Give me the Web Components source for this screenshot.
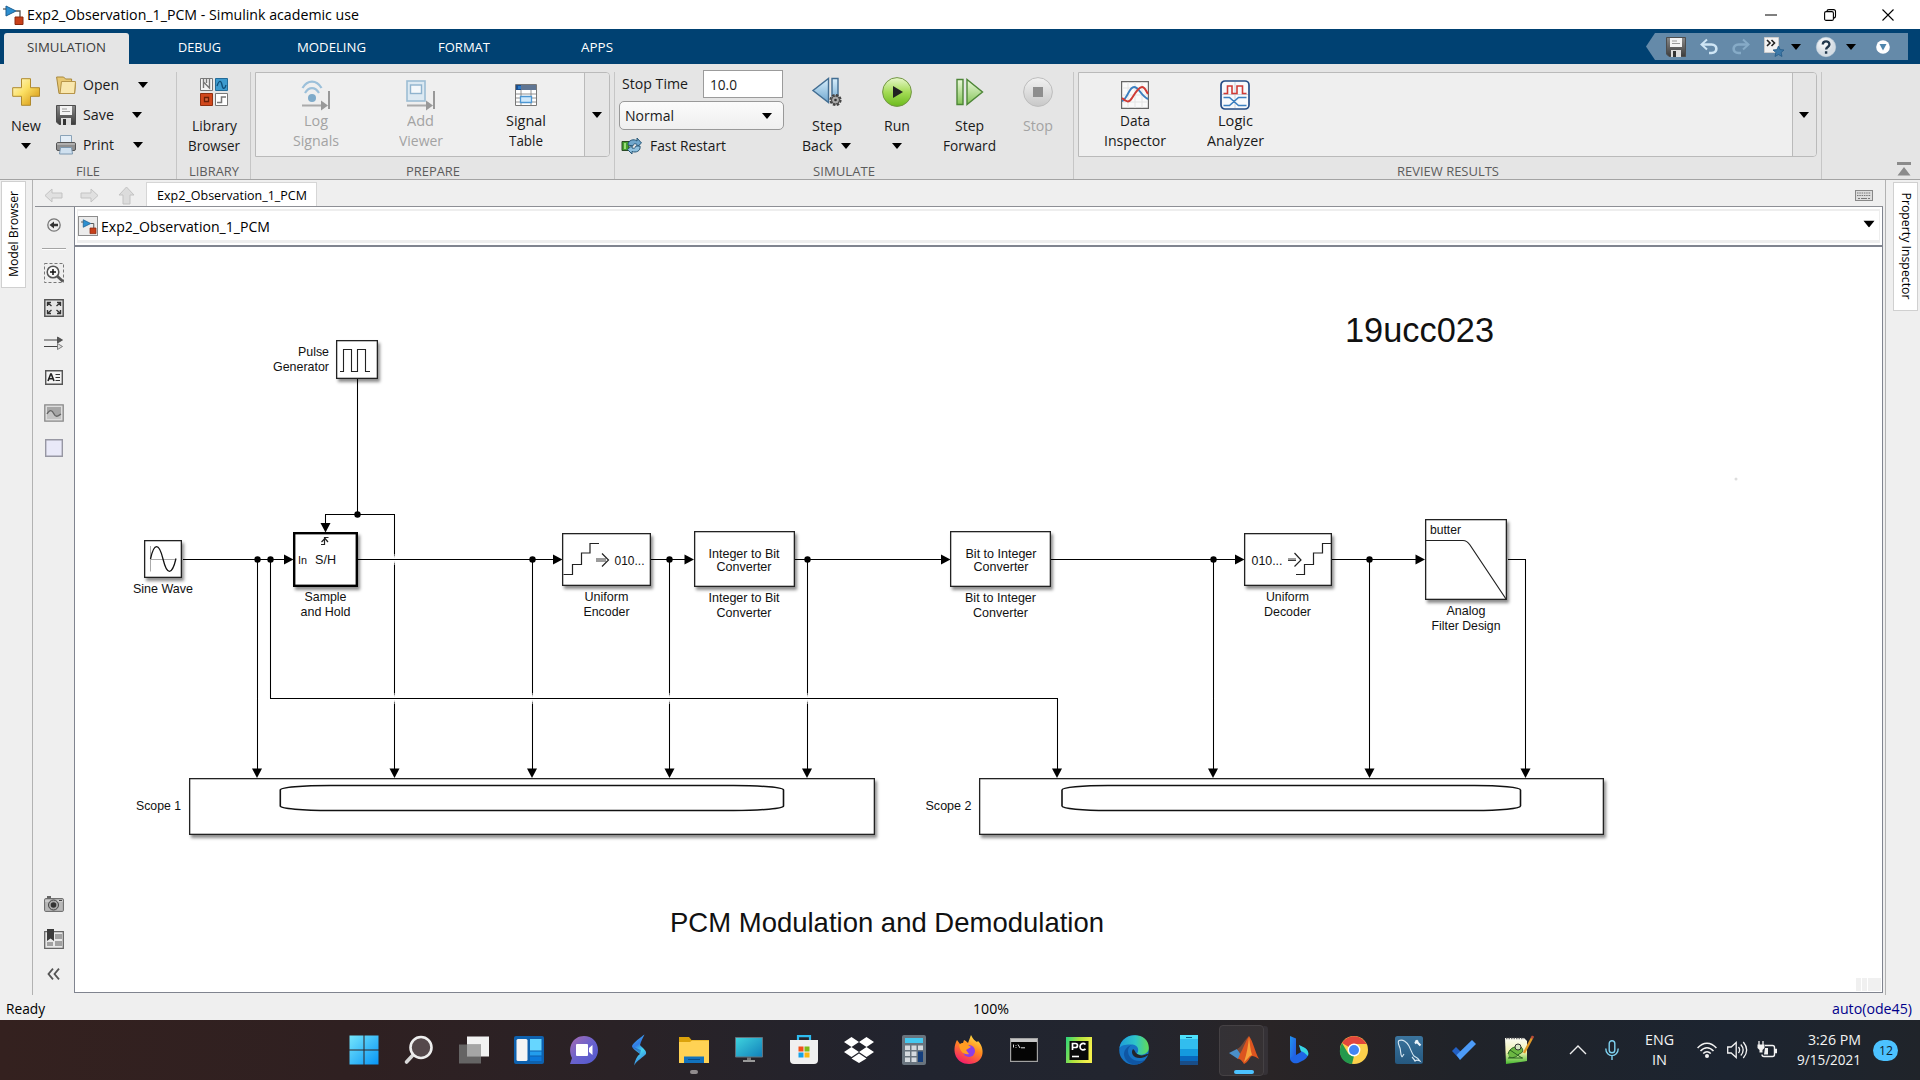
<!DOCTYPE html>
<html lang="en">
<head>
<meta charset="utf-8">
<title>Exp2_Observation_1_PCM - Simulink academic use</title>
<style>
html,body{margin:0;height:100%;overflow:hidden;background:#efefef}
body{font-family:"Open Sans","Noto Sans",sans-serif;font-size:14px;color:#1a1a1a}
</style>
</head>
<body>
<sim-window></sim-window>
<script>
const define=(name,css,html,ready)=>customElements.define(name,class extends HTMLElement{
  connectedCallback(){
    if(this.shadowRoot)return;
    const t=document.createElement('template');
    t.innerHTML='<style>*{box-sizing:border-box}'+css+'</style>'+(typeof html==='function'?html(this):html);
    this.attachShadow({mode:'open'}).append(t.content.cloneNode(true));
    if(ready)ready(this);
  }
});

/* Text squeezed or stretched horizontally to the width in "w". */
define('fit-text',':host{display:block;white-space:nowrap;line-height:20px;height:20px;flex:none}span{display:inline-block;transform-origin:0 50%}',
  e=>'<span>'+e.getAttribute('t')+'</span>',
  e=>{const w=+e.getAttribute('w');e.style.width=w+'px';const s=e.shadowRoot.querySelector('span');s.style.transform='scaleX('+w/parseFloat(getComputedStyle(s).width)+')';});
const T=(t,w,x='')=>`<fit-text t="${t}" w="${w}" ${x}></fit-text>`;

const floppy=`<linearGradient id="f" x2="0" y2="1"><stop stop-color="#8a8a8a"/><stop offset="1" stop-color="#3c3c3c"/></linearGradient><path d="M.5.5h19v19H3l-2.500-2.500z" fill="url(#f)" stroke="#4d4d4d"/><path d="M4 1h12v9H4z" fill="#f3f3f3"/><path d="M6 4h5M6 6.500h8" stroke="#999"/><path d="M5 13h10v7H5z" fill="#ddd"/><path d="M7 14h3v6H7z" fill="#333"/>`;
const simlogo=`<path d="M13 6h4v6" fill="none" stroke="#555" stroke-width="1.300"/><path d="M3 1l10 5-10 5z" fill="#2c8fd0" stroke="#1c5f92"/><path d="M0 4h3" stroke="#333"/><path d="M12 12h8v7.500h-8z" fill="#c8401a" stroke="#8a2a10"/>`;
const arrowShape='M1 7.500L8 1v4h10v5H8v4z';
const ICONS={
app:[20,20,simlogo],
model:[20,20,`<rect x=".5" y=".5" width="19" height="19" fill="#ececec" stroke="#8c8c8c"/><g transform="translate(3 3) scale(.75)">${simlogo}</g>`],
min:[12,12,'<path d="M0 6h12" stroke="#000"/>'],
restore:[12,12,'<rect x=".6" y="2.600" width="8.800" height="8.800" rx="1.500" fill="none" stroke="#000" stroke-width="1.100"/><path d="M3 2.500C3 1 4 .6 5 .6h4.500c1.300 0 2 .7 2 2V7c0 1-.5 2-2 2" fill="none" stroke="#000" stroke-width="1.100"/>'],
close:[12,12,'<path d="M.5.5l11 11M11.500.5l-11 11" stroke="#000" stroke-width="1.100"/>'],
save:[20,20,floppy],
undo:[18,16,'<path d="M1 5.500h9.500c6.500 0 6.500 8.500 0 8.500H8" fill="none" stroke="#cfe6f5" stroke-width="2.600"/><path d="M6 .5L.5 5.500 6 10.500" fill="none" stroke="#cfe6f5" stroke-width="2"/>'],
redo:[18,16,'<path d="M17 5.500H7.500C1 5.500 1 14 7.500 14H10" fill="none" stroke="#86abc7" stroke-width="2.600"/><path d="M12 .5l5.500 5L12 10.500" fill="none" stroke="#86abc7" stroke-width="2"/>'],
fav:[20,20,'<path d="M.5.5h14v15H.5z" fill="#f2f2f2" stroke="#ccc"/><path d="M3 3l3 3-3 3M7.500 3l3 3-3 3" fill="none" stroke="#222" stroke-width="1.600"/><path d="M14.500 9l1.600 3.600 3.900.4-2.900 2.600.9 3.900-3.500-2-3.500 2 .9-3.900L9 13l3.900-.4z" fill="#3d79a8" stroke="#235a86" stroke-width=".8"/>'],
help:[20,20,'<radialGradient id="h" cx=".4" cy=".3"><stop stop-color="#fff"/><stop offset="1" stop-color="#d5dde4"/></radialGradient><circle cx="10" cy="10" r="9.700" fill="url(#h)" stroke="#c6d3dd" stroke-width=".6"/><path d="M6.800 7.500c0-4.200 6.600-4.200 6.600 0 0 2.500-3.300 2.500-3.300 5M10.100 14.200v2.500" fill="none" stroke="#22384c" stroke-width="2.400"/>'],
circ:[14,14,'<circle cx="7" cy="7" r="6.800" fill="#fff"/><path d="M3.500 4h7L7 10.500z" fill="#4f86ad"/>'],
plus:[28,28,'<linearGradient id="p" x2="1" y2="1"><stop stop-color="#fffbd8"/><stop offset=".45" stop-color="#fbdf62"/><stop offset="1" stop-color="#d08a06"/></linearGradient><path d="M9.500.7h9v9h9v8.600h-9v9h-9v-9H.7V9.700h8.800z" fill="url(#p)" stroke="#b08a2e"/>'],
open:[20,18,'<path d="M.6 1h7l2 2h6v3l4 1-1 10.500H3z" fill="#e8c873" stroke="#a8883c"/><path d="M5.500 5.500h14L18.500 17.500H4z" fill="#f9e7ae" stroke="#b7954a"/>'],
print:[20,20,'<path d="M4.500.5h11v8h-11z" fill="#e4eef7" stroke="#8aa3b8"/><rect x=".5" y="7.500" width="19" height="8" rx="1.500" fill="#8f8f8f" stroke="#555"/><path d="M1 9h18" stroke="#d0d0d0"/><path d="M4.500 12.500h11l1 6.500h-13z" fill="#cfe0ef" stroke="#7c98b0"/>'],
library:[28,28,'<path d="M.5.5h12v12H.5z" fill="#f4f4f4" stroke="#777"/><path d="M3.500 1v9M3.500 4l6 6V1M6.500 1v4" stroke="#777" stroke-width="1.400" fill="none"/><path d="M15.500.5h12v12h-12z" fill="#3c9ace" stroke="#236b98"/><path d="M17 8c2-6 4-6 5-1s3 4 4 0" fill="none" stroke="#0f4f7a" stroke-width="1.300"/><path d="M.5 15.500h12v12H.5z" fill="#d1481d" stroke="#8f2f10"/><path d="M4.500 19.500h4v4h-4z" fill="#d9683f" stroke="#6c2008" stroke-width="1.300"/><path d="M15.500 15.500h12v12h-12z" fill="#fff" stroke="#777"/><path d="M17 24.500h4.500v-5.500H26" fill="none" stroke="#777" stroke-width="1.500"/>'],
log:[30,30,'<g fill="none" stroke="#9cc0da" stroke-width="2.200"><path d="M1.500 8c5-8.500 14-8.500 19 0M4 13c4-6.500 10-6.500 14 0"/></g><circle cx="11" cy="18" r="4" fill="#7fabca"/><path d="M1 25.500h20" stroke="#aaa" stroke-width="2"/><path d="M20 20.500l7 5-7 5z" fill="#999"/><path d="M28 11v18" stroke="#999" stroke-width="2"/>'],
viewer:[30,30,'<rect x="1" y="1" width="18" height="20" fill="#dce9f2" stroke="#9dbdd4" stroke-width="1.600"/><rect x="4.500" y="5" width="11" height="8.500" fill="#f4f8fb" stroke="#8fb3ce" stroke-width="1.400"/><path d="M1 25.500h20" stroke="#aaa" stroke-width="2"/><path d="M20 20.500l7 5-7 5z" fill="#999"/><path d="M28 11v18" stroke="#999" stroke-width="2"/>'],
table:[22,22,'<path d="M.5.5h21v21H.5z" fill="#fff" stroke="#777"/><path d="M1 1h20v5H1z" fill="#5f7593"/><path d="M1 1h5v5H1z" fill="#1d4e8c"/><rect x="3" y="2" width="3" height="3" fill="#2b79c8"/><path d="M1 10h20M1 14h20M1 18h20M6 6v15M16 6v15" stroke="#777" stroke-width=".8"/><path d="M5.500 12.500h11v6h-11z" fill="#cfe8fb" stroke="#4c96d2" stroke-width="1.300"/>'],
restart:[20,16,'<path d="M0 3.500h7v9H0z" fill="#45a02c" stroke="#2b4a24"/><path d="M2 5h2v6H2z" fill="#9bdc7d"/><path d="M6 7c0-5 6-6.500 9-4V0l4.500 5-4.500 4V6.500c-2-1.500-4-.5-4 1.500z" fill="#6fa6cc" stroke="#275777"/><path d="M18 8c1 5-4 7-8 5.500V16l-4.500-4.500L10 7.500V10c2 .8 3.500 0 4-2z" fill="#8fc0de" stroke="#275777"/>'],
stepback:[30,30,'<linearGradient id="sb" x2="0" y2="1"><stop stop-color="#d8effc"/><stop offset="1" stop-color="#6ea6cf"/></linearGradient><path d="M16.500 1.500v24L1 13.500z" fill="url(#sb)" stroke="#426d92" stroke-width="1.400"/><path d="M20 1.500h6v24h-6z" fill="url(#sb)" stroke="#426d92" stroke-width="1.400"/><circle cx="23.500" cy="23" r="5" fill="#bbb" stroke="#444" stroke-width="2.200" stroke-dasharray="2.500 1.400"/><circle cx="23.500" cy="23" r="4" fill="#aaa" stroke="#444"/><circle cx="23.500" cy="23" r="1.300" fill="#333"/>'],
run:[30,30,'<linearGradient id="r" x2="0" y2="1"><stop stop-color="#e8f8cc"/><stop offset=".5" stop-color="#a5dc57"/><stop offset="1" stop-color="#6bba1c"/></linearGradient><circle cx="15" cy="15" r="14.400" fill="url(#r)" stroke="#739646"/><path d="M11 9v12l10-6z" fill="#222"/>'],
stepfwd:[28,28,'<linearGradient id="sf" x2="0" y2="1"><stop stop-color="#eaf8da"/><stop offset="1" stop-color="#86c55a"/></linearGradient><path d="M1 1.500h6v25H1zM11 1.500v25L26.500 14z" fill="url(#sf)" stroke="#4d8637" stroke-width="1.400"/>'],
stop:[30,30,'<linearGradient id="s" x2="0" y2="1"><stop stop-color="#f2f2f2"/><stop offset="1" stop-color="#c8c8c8"/></linearGradient><circle cx="15" cy="15" r="14.400" fill="url(#s)" stroke="#bdbdbd"/><path d="M10 10h10v10H10z" fill="#8e8e8e"/>'],
data:[28,28,'<path d="M.6.6h26.800v26.800H.6z" fill="#fafafa" stroke="#666" stroke-width="1.200"/><path d="M1 7h26M1 14h26M1 21h26M7 1v26M14 1v26M21 1v26" stroke="#e4e4e4"/><path d="M1 20C6 19 8 6 13 6s7 9 14 12" fill="none" stroke="#3b7fc0" stroke-width="2"/><path d="M1 17c4 4 7 5 10 0S18 6 21 6s4 4 6 7" fill="none" stroke="#d03b36" stroke-width="2"/>'],
logic:[30,30,'<rect x="1" y="1" width="28" height="28" rx="4" fill="#f7f9fc" stroke="#244c85" stroke-width="1.700"/><path d="M15 2v26M2 14.500h26" stroke="#ccd3dd"/><path d="M3.500 13.500h4V6h4.500v7.500h5V6h5.500v7.500h4" fill="none" stroke="#d03b36" stroke-width="1.600"/><path d="M3.500 17.500h6l9 8h8M3.500 25.500h6l9-8h8" fill="none" stroke="#3b7fc0" stroke-width="1.600"/>'],
collapse:[14,14,'<path d="M0 0h14v3H0zM7 5l6.500 8.500H.5z" fill="#8b8b8b"/>'],
kbd:[18,11,'<rect x=".5" y=".5" width="17" height="10" fill="#ddd" stroke="#888"/><path d="M2 3h14M2 5.500h14" stroke="#777" stroke-dasharray="1.500 .8"/><path d="M3 8.500h2M6 8.500h6M13 8.500h2" stroke="#777"/>'],
left:[19,15,`<path d="${arrowShape}" fill="#e0e0e0" stroke="#c3c3c3"/>`],
right:[19,15,`<path d="${arrowShape}" transform="matrix(-1 0 0 1 19 0)" fill="#e0e0e0" stroke="#c3c3c3"/>`],
up:[17,19,'<path d="M8.500 1l7.500 8h-4v9H5V9H1z" fill="#dcdcdc" stroke="#c3c3c3"/>'],
hide:[14,14,'<circle cx="7" cy="7" r="6.200" fill="#eee" stroke="#777" stroke-width="1.300"/><path d="M2.500 7L7 3.500v2.200h4v2.600H7v2.200z" fill="#333"/>'],
zoom:[20,20,'<path d="M.5.5h19v19H.5z" fill="none" stroke="#777" stroke-dasharray="3 2"/><circle cx="9" cy="9" r="5.800" fill="#f8f8f8" stroke="#555" stroke-width="1.500"/><path d="M13 13l6 5.500" stroke="#555" stroke-width="2.800"/><path d="M6 9h6M9 6v6" stroke="#111" stroke-width="1.500"/>'],
fit:[20,18,'<path d="M.8.8h18.400v16.400H.8z" fill="#e5e5e5" stroke="#555" stroke-width="1.500"/><path d="M3.500 7V3.500H7M16.500 7V3.500H13M3.500 11v3.500H7M16.500 11v3.500H13M4 4l3.500 3M16 4l-3.500 3M4 14l3.500-3M16 14l-3.500-3" fill="none" stroke="#333" stroke-width="1.400"/>'],
arrows:[19,14,'<path d="M0 4h16M0 10.500h16" stroke="#444" stroke-width="1.200"/><path d="M13.500 1l5 3-5 3z" fill="#555" stroke="#444" stroke-width=".8"/><path d="M13.500 7.500l5 3-5 3z" fill="#ddd" stroke="#666" stroke-width=".8"/>'],
note:[18,15,'<path d="M.7.7h16.600v13.600H.7z" fill="#f4f4f4" stroke="#555" stroke-width="1.400"/><path d="M3 11l2.700-7h.6L9 11M4 8.800h4" fill="none" stroke="#222" stroke-width="1.600"/><path d="M10.500 4.500H15M10.500 7.500H15M10.500 10.500H15" stroke="#333"/>'],
image:[20,18,'<path d="M.8.8h18.400v16.400H.8z" fill="#ddd" stroke="#888" stroke-width="1.300"/><path d="M3 3h14v12H3z" fill="#a6a6a6"/><path d="M3 10c3-5 5-4 7 0s4 2 7 0v5H3z" fill="#c4c4c4"/><path d="M3 10c3-5 5-4 7 0s4 2 7 0" fill="none" stroke="#666" stroke-width="1.400"/>'],
area:[18,18,'<path d="M.7.7h16.600v16.600H.7z" fill="#e9e9f8" stroke="#9797a3" stroke-width="1.400"/>'],
camera:[20,16,'<path d="M3 0h4v3H3z" fill="#666"/><rect x=".6" y="2.600" width="18.800" height="12.800" rx="1" fill="#b8b8b8" stroke="#666"/><path d="M1 5h18" stroke="#ddd"/><circle cx="9.500" cy="9" r="5" fill="#aaa" stroke="#444"/><circle cx="9.500" cy="9" r="2.800" fill="#333"/><path d="M15 4.500h3" stroke="#444"/>'],
book:[20,20,'<path d="M.7 2.700h18.600v16.600H.7z" fill="#e8e8e8" stroke="#666" stroke-width="1.300"/><path d="M11 5h7v5h-7zM3 13h6v4H3zM11 12h7v5h-7z" fill="#a2a2a2"/><path d="M3 0h7v12l-3.500-2.500L3 12z" fill="#3b3b3b"/>'],
chev:[13,12,'<path d="M6 .7L1.500 6 6 11.300M12 .7L7.500 6l4.500 5.300" fill="none" stroke="#555" stroke-width="1.800"/>'],
/* taskbar */
win:[30,30,'<linearGradient id="w" x2="1" y2="1"><stop stop-color="#75e6fb"/><stop offset="1" stop-color="#0794f5"/></linearGradient><path d="M.5.5h14v14H.5zM15.500.5h14v14h-14zM.5 15.500h14v14H.5zM15.500 15.500h14v14h-14z" fill="url(#w)"/>'],
search:[28,30,'<path d="M8 20l-6.500 7" stroke="#d9d9d9" stroke-width="3.600" stroke-linecap="round"/><circle cx="16" cy="12.500" r="10.500" fill="#55494c" stroke="#eee" stroke-width="2.600"/>'],
tasks:[30,28,'<path d="M8 .5h22v20H8z" fill="#f2f2f2"/><path d="M0 8.500h22v19H0z" fill="#6b6b6b" opacity=".9"/><path d="M8 8.500h14v12H8z" fill="#a5a5a5"/>'],
widgets:[30,28,'<rect width="30" height="28" rx="2" fill="#0e61ae"/><rect x="2.500" y="3" width="11" height="22" rx="1.500" fill="#f4f4f4"/><path d="M16 3h11.500v11.500H16z" fill="#66d6ff"/><path d="M16 15.500h11.500v4H16z" fill="#229ded"/><path d="M16 20.500h11.500V25H16z" fill="#0c79da"/>'],
chat:[30,30,'<linearGradient id="c" x2="1" y2="1"><stop stop-color="#a96bb0"/><stop offset=".5" stop-color="#6a62cd"/><stop offset="1" stop-color="#5158ce"/></linearGradient><path d="M15 1C23 1 29 7 29 15s-6 14-14 14H1l2-6C-2 12 4 1 15 1z" fill="url(#c)"/><rect x="7" y="9" width="12" height="12" rx="1" fill="#fff"/><path d="M20 13l3.500-3v10L20 17z" fill="#fff"/>'],
skill:[18,32,'<linearGradient id="k" x2=".3" y2="1"><stop stop-color="#45b8ef"/><stop offset=".4" stop-color="#327be5"/><stop offset=".65" stop-color="#45d4ee"/><stop offset="1" stop-color="#3a86e0"/></linearGradient><path d="M14.500.5C11 3 3 9 2 12c0 3 5 5 8 8-3 2-5 6-6 11.500 3-5 9-8 12-11.500 1-4-4-6-6-9 1-4 3-7 4.500-10.500z" fill="url(#k)"/><path d="M3 13l7 7 1-4z" fill="#2558b8" opacity=".6"/>'],
folder:[30,28,'<path d="M0 1h10l2.500 3H30v9H0z" fill="#dba20b"/><path d="M0 6h11l2-1.500h17V27H0z" fill="#ffd254"/><path d="M5 20.500h20V27H5z" fill="#1272bd"/><path d="M9 23.500h12" stroke="#0b4c86"/>'],
monitor:[28,26,'<linearGradient id="m" x2="1" y2="1"><stop stop-color="#3fd4de"/><stop offset="1" stop-color="#117fba"/></linearGradient><path d="M.5.5h27V20H.5z" fill="url(#m)" stroke="#63727c"/><path d="M12 20.500h4v3h-4z" fill="#777"/><path d="M8 24h12" stroke="#999" stroke-width="2"/>'],
store:[30,30,'<path d="M9 6V1.200h12V6" fill="none" stroke="#2ebcf0" stroke-width="2.200"/><path d="M1 5h28v20q0 4-4 4H5q-4 0-4-4z" fill="#f0f0f0"/><path d="M9.500 11.500h5v5h-5z" fill="#f1511b"/><path d="M15.500 11.500h5v5h-5z" fill="#80b918"/><path d="M9.500 17.500h5v5h-5z" fill="#15a2e8"/><path d="M15.500 17.500h5v5h-5z" fill="#fbb813"/>'],
dropbox:[30,28,'<path d="M7.500 1L15 6 7.500 11 0 6zM22.500 1L30 6l-7.500 5L15 6zM7.500 11L15 16l-7.500 5L0 16zM22.500 11L30 16l-7.500 5L15 16zM15 17.500l7.500 5L15 27l-7.500-4.500z" fill="#fff"/>'],
calc:[24,30,'<rect width="24" height="30" rx="2" fill="#69747e"/><path d="M3 3h18v5H3z" fill="#45c9f0"/><path d="M3 10.500h5v4.500H3zM9.500 10.500h5v4.500h-5zM16 10.500h5v4.500h-5zM3 16.500h5V21H3zM9.500 16.500h5V21h-5zM3 22.500h5V27H3zM9.500 22.500h5V27h-5z" fill="#d5dade"/><path d="M16 16.500h5V27h-5z" fill="#153f7c"/>'],
firefox:[30,30,'<linearGradient id="ff" x1=".8" x2=".3" y2="1"><stop stop-color="#ffe84a"/><stop offset=".45" stop-color="#ff8a1e"/><stop offset="1" stop-color="#f4186e"/></linearGradient><path d="M3 5l3 4 3-1 1-3c2 1 3 2 4 3L17 0c2 4 4 6 6 7l1-1c8 8 6 23-9 23C2 29-3 16 3 5z" fill="url(#ff)"/><circle cx="15" cy="16" r="6" fill="#8b3fe6"/><path d="M5 10c3-3 7-2 9 0l3 2-5 3 3 4c-5 1-9-2-10-9z" fill="#ff9d22"/>'],
cmd:[28,24,'<rect x=".6" y=".6" width="26.800" height="22.800" fill="#050505" stroke="#a2a2a2" stroke-width="1.200"/><path d="M1 1h26v3H1z" fill="#c6c6c6"/><path d="M3.500 6.500v3M6 7v.8M6 9v.8M8 6.500l2 3.500M11 9.800h4" stroke="#ddd" stroke-width="1"/>'],
pycharm:[26,26,'<linearGradient id="py" x2="1" y2=".3"><stop stop-color="#28d67d"/><stop offset=".5" stop-color="#aee23d"/><stop offset="1" stop-color="#f4f04c"/></linearGradient><rect width="26" height="26" fill="url(#py)"/><path d="M3.500 4h19v19h-19z" fill="#090909"/><path d="M6.500 13V6.500h3a2 2 0 0 1 0 4h-3M19.500 7.500c-2-2-5.500-1-5.500 2.200s3.500 4.200 5.500 2.200" fill="none" stroke="#fff" stroke-width="1.700"/><path d="M6 19.500h7" stroke="#fff" stroke-width="1.600"/>'],
edge:[30,30,'<linearGradient id="e1" x2="1"><stop stop-color="#1e9dd9"/><stop offset=".55" stop-color="#2fc5c8"/><stop offset="1" stop-color="#62dc56"/></linearGradient><circle cx="15" cy="15" r="14.800" fill="#1673c4"/><path d="M.5 13C3-4 30-4 29.800 13c0 6-7 8-12 6 3-4 1-9-4-9.500C8 9 2 10 .5 13z" fill="url(#e1)"/><path d="M9 16c0 7 7 12 17 9C20 32 7 31 5 20c-.6-4 3-9 8-10-3 1-4 4-4 6z" fill="#0d4c9a" opacity=".75"/><path d="M14 14c-3 4 1 10 8 9 3-.4 5-1.500 7-3 0-1 0-1-1-1-4 2-8 2-11-1-1-1-1-3-3-4z" fill="#24242b"/>'],
phone:[18,30,'<rect width="18" height="30" rx="1" fill="#32bdee"/><path d="M0 0h18v4H0z" fill="#4de0fb"/><path d="M0 14h18v7H0z" fill="#149ade"/><path d="M0 21h18v5H0z" fill="#0868bd"/><path d="M0 26h18v4H0z" fill="#194d88"/><path d="M6 2.500h6" stroke="#0b5c80"/>'],
matlab:[30,28,'<path d="M0 17l8-4 5 5-4 5z" fill="#4a8fc8"/><path d="M8 13c5-2 7-9 12-13-2 7-4 15-8 19z" fill="#74493a"/><path d="M20 0c-4 6-6 13-9 18l-2 5c3 0 4 2 6 5 5-2 5-7 8-8 2 0 4 1 7 3C26 16 24 5 20 0z" fill="#dc541f"/><path d="M20 1c-1 9-2 16-5 25 4-3 5-6 8-7-2-6-2-12-3-18z" fill="#f7a13a"/>'],
bing:[20,28,'<linearGradient id="b" x2="1" y2="1"><stop stop-color="#2195ef"/><stop offset="1" stop-color="#2550dd"/></linearGradient><path d="M1 0l6 2.500V22l-3 4-3-4z" fill="url(#b)"/><path d="M10 9l6 3c5 3 4 9-1 12l-6 3c-4 1-8-1-8-5l6-3 5-3z" fill="#1f65e5"/><path d="M10 9l6 3c3 2 4 5 3 8l-4-3.500-3-1.500z" fill="#38d7df"/>'],
chrome:[28,28,'<circle cx="14" cy="14" r="14" fill="#fcd04b"/><path d="M14 14L2 7C8-2.500 21-2 26.500 8H14z" fill="#e2463b"/><path d="M2 7l6.500 11 5.500 2-2 8C1 27-3 16 2 7z" fill="#24994c"/><circle cx="14" cy="14" r="6.400" fill="#fff"/><circle cx="14" cy="14" r="5" fill="#4285f4"/>'],
mysql:[28,28,'<linearGradient id="my" x2="0" y2="1"><stop stop-color="#3b749d"/><stop offset="1" stop-color="#25587f"/></linearGradient><rect width="28" height="28" rx="2.500" fill="url(#my)"/><path d="M7 21c-2-3-1-6-2-9C4 9 2 6 4 4.500 8 3 12 6 14 10c2 4 3 8 5 10 2 1 4 2 6 5-2-1-4-1-5 0-1-2-2-3-3-4M7 21l2-3" fill="none" stroke="#d7e8f2" stroke-width="1.100"/><path d="M20.500 4.500l5 5M20 7.500l3-3" stroke="#eef5fa" stroke-width="2.200"/>'],
todo:[24,20,'<path d="M0 11l4-4 8 8-4 4.500z" fill="#2260c4"/><path d="M4.500 15L20 0l4 4L8 20z" fill="#4c9bf7"/>'],
npp:[30,28,'<linearGradient id="n" x2="0" y2="1"><stop stop-color="#fcfcf5"/><stop offset=".55" stop-color="#eff2b0"/><stop offset="1" stop-color="#43b92d"/></linearGradient><path d="M1 2h19l3 3v20L2 28z" fill="url(#n)"/><path d="M2 2.500h18" stroke="#777" stroke-width="1.500" stroke-dasharray="1.500 1"/><path d="M4 18c2-7 8-8 13-7 3 3 2 6-2 7-3 4-7 4-10 3" fill="#6cb842" stroke="#285f22"/><circle cx="14" cy="11" r="3" fill="#d7e7c3" stroke="#333"/><path d="M4 22h15M6 14l12 8" stroke="#275e1d"/><path d="M28.500 1L20 17" stroke="#e09a28" stroke-width="2.400"/><path d="M29 0l-1.300 2.500" stroke="#ba4a39" stroke-width="2.400"/>'],
tup:[18,10,'<path d="M1 9l8-8 8 8" fill="none" stroke="#eee" stroke-width="1.400"/>'],
mic:[14,20,'<rect x="4.200" y=".7" width="5.600" height="12" rx="2.800" fill="none" stroke="#7ed0ee" stroke-width="1.400"/><path d="M.8 8.500c0 9.500 12.400 9.500 12.400 0M7 16v4" fill="none" stroke="#7ed0ee" stroke-width="1.400"/>'],
wifi:[20,16,'<g fill="none" stroke="#f2f2f2" stroke-width="1.500"><path d="M.6 6c5.500-6.500 13.300-6.500 18.800 0M3.500 9c4-4.500 9-4.500 13 0M6.200 11.500c2.300-2.500 5.300-2.500 7.600 0"/></g><circle cx="10" cy="14" r="2" fill="#f2f2f2"/>'],
sound:[20,18,'<path d="M.7 6h3.500l5-4.500v15L4.200 12H.7z" fill="none" stroke="#f2f2f2" stroke-width="1.300"/><path d="M11.500 6c1.500 2 1.500 4 0 6M13.800 3.500c3 3.500 3 7.500 0 11M16.300 1c4.200 5 4.200 11 0 16" fill="none" stroke="#f2f2f2" stroke-width="1.300"/>'],
batt:[20,18,'<path d="M8 4.500h7.500q2 0 2 2v7q0 2-2 2H7q-2 0-2-2" fill="none" stroke="#f2f2f2" stroke-width="1.400"/><path d="M18.500 8h1v4h-1z" stroke="#f2f2f2"/><path d="M8 7h3v6.500H7z" fill="#f2f2f2"/><path d="M2 0v4M6 0v4" stroke="#f2f2f2" stroke-width="1.300"/><path d="M.5 3.500h7V7l-2 2v2.500h-3V9l-2-2z" fill="#f2f2f2"/>']
};
define('ui-icon',':host{display:block;flex:none}svg{display:block;overflow:visible}',e=>{
  const [w,h,s]=ICONS[e.getAttribute('name')];
  return `<svg width="${w}" height="${h}" viewBox="0 0 ${w} ${h}">${s}</svg>`;});
const I=(n,x='')=>`<ui-icon name="${n}" ${x}></ui-icon>`;

define('drop-arrow',':host{display:block;width:10px;height:6px;flex:none}svg{display:block}','<svg width="10" height="6"><path d="M0 0h10L5 6z" fill="#000"/></svg>');
const A='<drop-arrow></drop-arrow>';

define('title-bar',`:host{display:flex;height:29px;background:#fff;align-items:center;padding-left:3px;font-size:14.500px;color:#000}
.t{margin-left:4px;flex:1}.w{display:flex;gap:46.500px;padding-right:26px}`,
 `${I('app')}<div class="t">${T('Exp2_Observation_1_PCM - Simulink academic use',332)}</div><div class="w">${I('min')}${I('restore')}${I('close')}</div>`);

define('tab-bar',`:host{display:flex;height:35px;background:#004172;padding:4px 0 0 4px;color:#fff;font-size:13.500px;gap:7.500px}
.b{width:125px;height:31px;display:flex;justify-content:center;align-items:center;padding-bottom:4px}
.s{background:#e5e5e5;color:#3b3b3b;border-radius:3px 3px 0 0}
.q{margin-left:auto;margin-right:12px;width:262px;height:27px;background:#658aa9;clip-path:polygon(9px 0,100% 0,100% 100%,9px 100%,0 50%);display:flex;align-items:center;padding-left:20px}`,
 `<div class="b s">${T('SIMULATION',79)}</div><div class="b">${T('DEBUG',43)}</div><div class="b">${T('MODELING',69)}</div><div class="b">${T('FORMAT',52)}</div><div class="b">${T('APPS',32)}</div>
 <div class="q">${I('save')}${I('undo','style="margin-left:15px"')}${I('redo','style="margin-left:12px"')}${I('fav','style="margin-left:15px"')}<drop-arrow style="margin-left:7px"></drop-arrow>${I('help','style="margin-left:15px"')}<drop-arrow style="margin-left:10px"></drop-arrow>${I('circ','style="margin-left:20px"')}</div>`);

/* A labelled group of the toolstrip. */
define('strip-section',':host{display:flex;flex-direction:column;height:115px;flex:none;position:relative;border-right:1px solid transparent;border-image:linear-gradient(transparent 8%,#c6c6c6 8%) 1}.b{height:98px;display:flex}.l{display:flex;justify-content:center;align-items:center;height:17px;color:#5c5c5c;font-size:13px}',
 e=>`<div class="b"><slot></slot></div><div class="l">${T(e.getAttribute('label'),e.getAttribute('lw'))}</div>`);

/* Tall button: icon above one or two centred lines. "tight" narrows the gap below the icon. */
define('strip-button',':host{display:flex;flex-direction:column;align-items:center;flex:none;color:#1a1a1a}:host([off]){color:#a3a3a3}.i{height:34px;display:flex;align-items:center;justify-content:center;margin-bottom:6.500px}:host([tight]) .i{height:36px;margin-bottom:-2.500px}.r{display:flex;height:20px;align-items:center;gap:8px}',
 e=>{const g=e.getAttribute('lines').split('|').map(s=>{
   if(s==='v')return '<div class="r">'+A+'</div>';
   const [t,w,d]=s.split(':');return `<div class="r">${T(t,w)}${d?A:''}</div>`;}).join('');
  return `<div class="i">${I(e.getAttribute('icon'))}</div>${g}`;});
const B=(icon,lines,w,x='',pad='')=>`<strip-button icon="${icon}" lines="${lines}" style="width:${w}px;${pad}" ${x}></strip-button>`;

define('strip-gallery',':host{display:flex;height:85px;margin-top:8px;background:#efefef;border:1px solid #bababa;border-radius:0 4px 4px 0;flex:none;overflow:hidden}.c{flex:1;display:flex;padding-top:4px}.d{width:24.500px;background:#e5e5e5;border-left:1px solid #bababa;display:flex;align-items:center;justify-content:center}',
 `<div class="c"><slot></slot></div><div class="d">${A}</div>`);

define('tool-strip',`:host{display:flex;height:116px;background:#e5e5e5;border-bottom:1px solid #a3a3a3;font-size:14px}
.f{display:flex;flex-direction:column;gap:10px;padding:11px 0 0 6px;width:102px}
.f div{display:flex;align-items:center;height:20px;gap:7px}
.o{width:170px;padding:6px 0 0 4px}.o1,.o2,.o3{display:flex;align-items:center}
.in{margin-left:15px;width:80px;height:28px;background:#fff;border:1px solid #9b9b9b;padding:4px 6px}
.o1{padding-left:3px}.o2{margin-top:3px;width:165px;height:29px;border:1px solid #999;border-radius:5px;background:linear-gradient(#fbfbfb,#efefef);padding:0 11px 0 5px;justify-content:space-between}
.o3{padding:6px 0 0 3px;gap:8px}.c{margin-left:auto;padding:98px 9px 0 0}.s{display:flex;padding:11px 0 0 1px}`,
 `<strip-section label="FILE" lw="24" style="width:177px">
   ${B('plus','New:30|v',51,'','padding-top:11px')}
   <div class="f" style="padding-left:5px">
    <div>${I('open')}${T('Open',36)}<drop-arrow style="margin-left:12px"></drop-arrow></div>
    <div>${I('save')}${T('Save',31)}<drop-arrow style="margin-left:11px"></drop-arrow></div>
    <div>${I('print')}${T('Print',31)}<drop-arrow style="margin-left:12px"></drop-arrow></div></div>
  </strip-section>
  <strip-section label="LIBRARY" lw="50" style="width:74px">${B('library','Library:45|Browser:52',74,'','padding-top:11px')}</strip-section>
  <strip-section label="PREPARE" lw="54" style="width:364px"><strip-gallery style="margin-left:4px;width:354.500px"><div style="width:7px"></div>
   ${B('log','Log:24|Signals:46',105,'off tight')}${B('viewer','Add:27|Viewer:44',105,'off tight')}${B('table','Signal:40|Table:34',105,'tight')}</strip-gallery></strip-section>
  <strip-section label="SIMULATE" lw="62" style="width:459px">
   <div class="o"><div class="o1">${T('Stop Time',66)}<div class="in">${T('10.0',27)}</div></div>
   <div class="o2">${T('Normal',49)}${A}</div><div class="o3">${I('restart')}${T('Fast Restart',76)}</div></div>
   <div class="s">${B('stepback','Step:30|Back:31:v',81)}${B('run','Run:26|v',59)}${B('stepfwd','Step:29|Forward:53',87)}${B('stop','Stop:30',49,'off')}</div>
  </strip-section>
  <strip-section label="REVIEW RESULTS" lw="102" style="width:748px"><strip-gallery style="margin-left:4px;width:739px"><div style="width:6px"></div>
   ${B('data','Data:30|Inspector:62',100,'tight')}${B('logic','Logic:35|Analyzer:57',100,'tight')}</strip-gallery></strip-section>
  <div class="c">${I('collapse')}</div>`);

define('side-tab',':host{display:flex;background:#fff;border:1px solid #d0d0d0;align-items:center;justify-content:center;flex:none;color:#000;font-size:12.500px;overflow:visible}.r{flex:none}',
 e=>`<div class="r" style="transform:translateY(-1px) rotate(${e.getAttribute('deg')}deg)">${T(e.getAttribute('text'),e.getAttribute('tw'))}</div>`);

define('side-palette',`:host{display:flex;flex-direction:column;width:41px;align-items:center;flex:none}
.k{height:35px;display:flex;align-items:center}.h{height:36px}.s{width:24px;height:2px;background:#a5a5a5;border-bottom:1px solid #fff;margin:5px 0}.e{flex:1}.z{height:2px}`,
 `<div class="k h">${I('hide')}</div><div class="s"></div>${['zoom','fit','arrows','note','image','area'].map(n=>`<div class="k">${I(n)}</div>`).join('')}<div class="e"></div>${['camera','book','chev'].map(n=>`<div class="k">${I(n)}</div>`).join('')}<div class="z"></div>`);

/* Diagram node; coordinates share the wiring layer's system. */
define('sim-block',`:host{position:absolute;background:#fff;border:1px solid #111;box-shadow:2px 3px 3px rgba(0,0,0,.45)}:host([bold]){border:2px solid #000}svg{position:absolute;overflow:visible}`,
 e=>{const g=n=>+e.getAttribute(n),x=g('x'),y=g('y'),w=g('w'),h=g('h');
  const b=e.hasAttribute('bold')?2:1;
  e.style.cssText=`box-sizing:border-box;left:${x-75}px;top:${y-247}px;width:${w}px;height:${h}px`;
  return `<svg style="left:${-b}px;top:${-b}px" width="${w}" height="${h}" viewBox="${x} ${y} ${w} ${h}" font-family="Liberation Sans,Arial,sans-serif" font-size="12.400" fill="none" stroke="#222">${b===1?`<rect x="${x+.65}" y="${y+.65}" width="${w-1.3}" height="${h-1.3}" stroke="#222" stroke-width="1.300"/>`:`<rect x="${x+1.2}" y="${y+1.2}" width="${w-2.4}" height="${h-2.4}" stroke="#000" stroke-width="2.400"/>`}${GLYPHS[e.getAttribute('kind')]||''}</svg>`;});
const tx=(t,x,y,w,a='middle',fs=12.4)=>`<text x="${x}" y="${y}" text-anchor="${a}" font-size="${fs}" textLength="${w}" lengthAdjust="spacingAndGlyphs" fill="#111" stroke="none">${t}</text>`;
const GLYPHS={
 pulse:'<path d="M340 371.500h3.500V349.500h8v22h6v-22h8v22h4.500" stroke-width="1.100"/>',
 sine:'<path d="M150.500 546v25.500M150 559.500h26" stroke="#aaa"/><path d="M150.500 559C154 542.500 159 542.500 163 559s9 16.500 13-.5" stroke="#111" stroke-width="1.300"/>',
 sh:tx('In',298,563.500,9,'start',11.5)+tx('S/H',325.5,564,21)+'<path d="M321 544.500h3.500v-7h4" stroke-width="1.200"/><path d="M321.500 542L325 538.500l3 3.500" stroke-width="1.200"/>',
 enc:'<path d="M563.500 574.500h9v-10h9v-11.500h8.500v-9.500h9" stroke-width="1.200"/><path d="M596 559h10M596 561h10" stroke-width=".9"/><path d="M602 553.500l6.500 6.500-6.500 6.500" stroke-width="1.200"/>'+tx('010...',614.5,564.5,30,'start'),
 dec:'<path d="M1296 574.500h8.500v-10h9v-11.500h9v-9.500h9" stroke-width="1.200"/><path d="M1288 559h8M1288 560.500h8" stroke-width=".9"/><path d="M1294.500 553l6.500 7-6.500 6.500" stroke-width="1.200"/>'+tx('010...',1251.5,564.5,31,'start'),
 itb:tx('Integer to Bit',744,558,71)+tx('Converter',744,570.500,55),
 bti:tx('Bit to Integer',1001,558,71)+tx('Converter',1001,570.500,55),
 filt:tx('butter',1430,534,31,'start')+'<path d="M1426 540.500h37q4 0 7 4.500l36 54" stroke-width="1.200"/>',
 sc1:'<rect x="280.300" y="785.500" width="503.200" height="25" rx="50" ry="4.500" stroke-width="1.600" stroke="#111"/>',
 sc2:'<rect x="1062" y="785.500" width="458.500" height="25" rx="46" ry="4.500" stroke-width="1.600" stroke="#111"/>'
};
const K=(kind,x,y,w,h,b='')=>`<sim-block kind="${kind}" x="${x}" y="${y}" w="${w}" h="${h}" ${b}></sim-block>`;
const dn=(x,y)=>`<path d="M${x-5} ${y-9.500}h10l-5 9.500z"/>`, rt=(x)=>`<path d="M${x-9.5} 554.500v10l9.500-5z"/>`, dot=(x,y)=>`<circle cx="${x}" cy="${y}" r="3.200"/>`;
/* Wires crossing behind another one fade out on both sides of it. */
const fade=(x,y)=>`<path d="M${x} ${y-5.5}v2M${x} ${y+3.5}v2" stroke-opacity=".55"/><path d="M${x} ${y-3.5}v1.500M${x} ${y+2}v1.500" stroke-opacity=".2"/>`;

define('model-canvas',`:host{display:block;position:relative;flex:1;background:#fff;overflow:hidden}.w{position:absolute;left:0;top:0}
.g{position:absolute;right:1px;bottom:1px;display:flex;gap:1px}.g i{display:block;width:5px;height:13px;background:#f0f0f0}.g i:last-child{width:13px}`,
 `<svg class="w" width="1807" height="745" viewBox="75 247 1807 745" font-family="Liberation Sans,Arial,sans-serif">
  <g fill="none" stroke="#000" stroke-width="1.050">
   <path d="M357.500 379V514.500M325.500 524V514.500H394.500V554M394.500 565V693M394.500 704V770M183 559.500H284M257.500 559.500V770M270.500 559.500V698.500H1057.500V770M358 559.500H553M532.500 559.500V693M532.500 704V770M651 559.500H685M669.500 559.500V693M669.500 704V770M795 559.500H941M807.500 559.500V693M807.500 704V770M1051 559.500H1235M1213.500 559.500V770M1332 559.500H1416M1369.500 559.500V770M1508 559.500H1525.500V770"/>
   ${fade(394.5,559.5)}${[394.5,532.5,669.5,807.5].map(x=>fade(x,698.5)).join('')}
  </g>
  <g fill="#000">${[257,394.5,532,669.5,807,1057,1213,1369.5,1525.5].map(x=>dn(x,778)).join('')}${dn(325.5,532.5)}${[293.5,562.5,694,950.5,1244.5,1425].map(rt).join('')}
  ${dot(357.5,514.5)}${[257.5,270.5,532.5,669.5,807.5,1213.5,1369.5].map(x=>dot(x,559.5)).join('')}</g>
  ${tx('Pulse',329,356,31,'end')}${tx('Generator',329,371,56,'end')}${tx('Sine Wave',163,593,60)}
  ${tx('Sample',325.5,601,42)}${tx('and Hold',325.5,616,50)}
  ${tx('Uniform',606.5,601,44)}${tx('Encoder',606.5,616,46)}
  ${tx('Integer to Bit',744,602,71)}${tx('Converter',744,617,55)}
  ${tx('Bit to Integer',1000.5,602,71)}${tx('Converter',1000.5,617,55)}
  ${tx('Uniform',1287.5,601,43)}${tx('Decoder',1287.5,616,47)}
  ${tx('Analog',1466,615,39)}${tx('Filter Design',1466,630,69)}
  ${tx('Scope 1',181,810,45,'end')}${tx('Scope 2',971.5,810,46,'end')}
  ${tx('19ucc023',1345,342,149,'start',34.4)}${tx('PCM Modulation and Demodulation',670,931.5,434,'start',28)}
  <circle cx="1736" cy="479" r="1.500" fill="#ddd"/>
 </svg>
 ${K('pulse',336,340,42,39)}${K('sine',144,540,38,38)}${K('sh',293,532,65,55,'bold')}${K('enc',562,533,89,53)}${K('itb',694,531,101,56)}
 ${K('bti',950,531,101,56)}${K('dec',1244,533,88,53)}${K('filt',1425,519,82,81)}${K('sc1',189,778,686,57)}${K('sc2',979,778,625,57)}
 <div class="g"><i></i><i></i><i></i></div>`);

define('model-editor',`:host{display:flex;flex:1;min-width:0}
.l{width:33px;border-right:1px solid #b2b2b2;padding:1px 0 0 1px;flex:none}.r{width:35px;border-left:1px solid #b2b2b2;padding:2px 0 0 7px;flex:none}
.m{flex:1;display:flex;flex-direction:column;padding:0 2px 2px 0;min-width:0}
.t{height:27px;border-bottom:1.500px solid #8d8f95;margin-left:2px;display:flex;align-items:center;padding:4px 0 0 9px;flex:none}
.tab{margin-left:11px;align-self:flex-end;height:24px;flex:none;width:171px;background:#fff;border:1px solid #d6d6d6;border-bottom:0;display:flex;align-items:center;justify-content:center;font-size:12.500px;color:#000;padding-top:3px}
.b{display:flex;flex:1;min-height:0}.f{flex:1;display:flex;flex-direction:column;border:1px solid #80848f;border-top:0;min-width:0}
.p{height:40px;border-bottom:2px solid #80848f;background:#fff;padding:2px;flex:none}
.q{height:100%;border:solid #eee;border-width:2px 1px 3px;display:flex;align-items:center;padding:2px 5px 0 0;gap:3px;font-size:14.500px;color:#000}`,
 `<div class="l"><side-tab text="Model Browser" tw="86" deg="-90" style="width:25px;height:107px"></side-tab></div>
 <div class="m"><div class="t">${I('left')}${I('right','style="margin-left:17px"')}${I('up','style="margin-left:19px"')}<div class="tab">${T('Exp2_Observation_1_PCM',150)}</div>${I('kbd','style="margin-left:auto;margin-right:10px"')}</div>
 <div class="b"><side-palette></side-palette><div class="f"><div class="p"><div class="q">${I('model','style="margin-top:-1px"')}${T('Exp2_Observation_1_PCM',169)}<drop-arrow style="margin-left:auto;margin-bottom:5px;transform:scale(1.150)"></drop-arrow></div></div><model-canvas></model-canvas></div></div></div>
 <div class="r"><side-tab text="Property Inspector" tw="107" deg="90" style="width:25px;height:129px"></side-tab></div>`);

define('status-bar',':host{display:flex;height:25px;align-items:center;padding:2px 8px 0 6px;font-size:14.500px;color:#000;justify-content:space-between;flex:none}',
 `${T('Ready',39)}${T('100%',36,'style="margin-left:104px"')}${T('auto(ode45)',80,'style="color:#00008b"')}`);

define('task-bar',`:host{display:flex;height:60px;align-items:center;background:linear-gradient(90deg,#34211f 0,#2f2021 18%,#2a2226 32%,#21242f 48%,#22252f 58%,#292426 66%,#202329 76%,#1c2430 90%,#20242a);padding-left:336px;color:#f4f4f4;font-size:14.500px;flex:none}
.a{width:55px;height:60px;display:flex;align-items:center;justify-content:center;position:relative;flex:none}
.a.n::after{content:"";position:absolute;left:24px;top:50px;width:8px;height:4px;border-radius:2px;background:#918c8e}
.a.s::before{content:"";position:absolute;left:3px;top:5px;width:43px;height:49px;border:1px solid #454144;border-radius:4px;background:#ffffff10;box-shadow:5px 0 0 -1px #353136}
.a.s ui-icon{position:relative}.a.s::after{content:"";position:absolute;left:18px;top:50px;width:20px;height:4px;border-radius:2px;background:#4cc2ff}
.y{display:flex;align-items:center;margin-left:23px}.c{display:flex;flex-direction:column;align-items:center}.e{align-items:flex-end}
.n2{margin-left:12px;width:25px;height:21px;border-radius:10.500px;background:#4cc2ff;color:#10202c;display:flex;align-items:center;justify-content:center;font-size:13px}`,
 ['win','search','tasks','widgets','chat','skill','folder','monitor','store','dropbox','calc','firefox','cmd','pycharm','edge','phone','matlab','bing','chrome','mysql','todo','npp'].map(n=>`<div class="a${n==='folder'?' n':n==='matlab'?' s':''}">${I(n)}</div>`).join('')+
 `<div class="y">${I('tup')}${I('mic','style="margin-left:18px"')}<div class="c" style="margin-left:26px">${T('ENG',29)}${T('IN',15)}</div>${I('wifi','style="margin-left:23px"')}${I('sound','style="margin-left:10px"')}${I('batt','style="margin-left:10px"')}<div class="c e" style="margin-left:20px">${T('3:26 PM',53)}${T('9/15/2021',64)}</div><div class="n2">${T('12',14)}</div></div>`);

define('sim-window',':host{display:flex;flex-direction:column;width:1920px;height:1080px;background:#efefef}',
 '<title-bar></title-bar><tab-bar></tab-bar><tool-strip></tool-strip><model-editor></model-editor><status-bar></status-bar><task-bar></task-bar>');
</script>
</body>
</html>
